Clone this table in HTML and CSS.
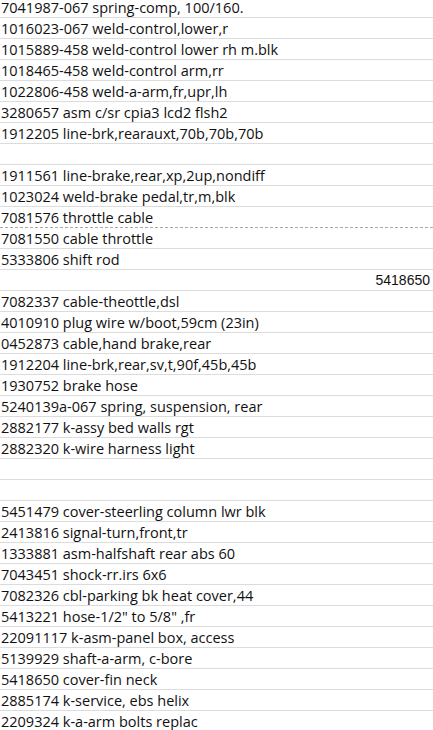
FILE: index.html
```html
<!DOCTYPE html>
<html>
<head>
<meta charset="utf-8">
<link rel="stylesheet" href="styles.css">
</head>
<body>
<div class="sheet">
  <div class="row">7041987-067 spring-comp, 100/160.</div>
  <div class="row">1016023-067 weld-control,lower,r</div>
  <div class="row">1015889-458 weld-control lower rh m.blk</div>
  <div class="row">1018465-458 weld-control arm,rr</div>
  <div class="row">1022806-458 weld-a-arm,fr,upr,lh</div>
  <div class="row">3280657 asm c/sr cpia3 lcd2 flsh2</div>
  <div class="row">1912205 line-brk,rearauxt,70b,70b,70b</div>
  <div class="row"></div>
  <div class="row">1911561 line-brake,rear,xp,2up,nondiff</div>
  <div class="row">1023024 weld-brake pedal,tr,m,blk</div>
  <div class="row dashed">7081576 throttle cable</div>
  <div class="row">7081550 cable throttle</div>
  <div class="row">5333806 shift rod</div>
  <div class="row num">5418650</div>
  <div class="row">7082337 cable-theottle,dsl</div>
  <div class="row">4010910 plug wire w/boot,59cm (23in)</div>
  <div class="row">0452873 cable,hand brake,rear</div>
  <div class="row">1912204 line-brk,rear,sv,t,90f,45b,45b</div>
  <div class="row">1930752 brake hose</div>
  <div class="row">5240139a-067 spring, suspension, rear</div>
  <div class="row">2882177 k-assy bed walls rgt</div>
  <div class="row">2882320 k-wire harness light</div>
  <div class="row"></div>
  <div class="row"></div>
  <div class="row">5451479 cover-steerling column lwr blk</div>
  <div class="row">2413816 signal-turn,front,tr</div>
  <div class="row">1333881 asm-halfshaft rear abs 60</div>
  <div class="row">7043451 shock-rr.irs 6x6</div>
  <div class="row">7082326 cbl-parking bk heat cover,44</div>
  <div class="row">5413221 hose-1/2" to 5/8" ,fr</div>
  <div class="row">22091117 k-asm-panel box, access</div>
  <div class="row">5139929 shaft-a-arm, c-bore</div>
  <div class="row">5418650 cover-fin neck</div>
  <div class="row">2885174 k-service, ebs helix</div>
  <div class="row">2209324 k-a-arm bolts replac</div>
</div>
</body>
</html>
```
FILE: styles.css
```css
html, body {
  margin: 0;
  padding: 0;
  background: #ffffff;
  overflow: hidden;
}
.sheet {
  margin-top: -3px;
  width: 433px;
}
.row {
  box-sizing: border-box;
  height: 21px;
  border-bottom: 1px solid #dcdcdc;
  padding-left: 1px;
  padding-right: 3px;
  font-family: "Open Sans", sans-serif;
  font-size: 14.5px;
  line-height: 21px;
  color: #111111;
  white-space: nowrap;
  overflow: hidden;
}
.row.dashed {
  border-bottom: 1px dashed #a8a8a8;
}
.row.num {
  text-align: right;
  font-family: "Liberation Sans", Arial, sans-serif;
  font-size: 14px;
}
```
